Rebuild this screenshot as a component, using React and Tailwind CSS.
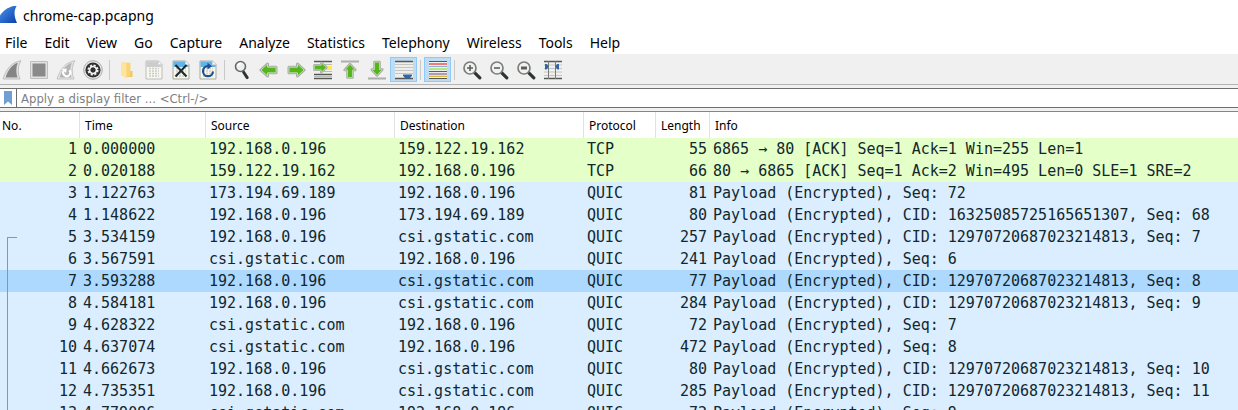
import React from 'react';

const menus = ['File', 'Edit', 'View', 'Go', 'Capture', 'Analyze', 'Statistics', 'Telephony', 'Wireless', 'Tools', 'Help'];

const packets = [
  [1, '0.000000', '192.168.0.196', '159.122.19.162', 'TCP', 55, '6865 → 80 [ACK] Seq=1 Ack=1 Win=255 Len=1'],
  [2, '0.020188', '159.122.19.162', '192.168.0.196', 'TCP', 66, '80 → 6865 [ACK] Seq=1 Ack=2 Win=495 Len=0 SLE=1 SRE=2'],
  [3, '1.122763', '173.194.69.189', '192.168.0.196', 'QUIC', 81, 'Payload (Encrypted), Seq: 72'],
  [4, '1.148622', '192.168.0.196', '173.194.69.189', 'QUIC', 80, 'Payload (Encrypted), CID: 16325085725165651307, Seq: 68'],
  [5, '3.534159', '192.168.0.196', 'csi.gstatic.com', 'QUIC', 257, 'Payload (Encrypted), CID: 12970720687023214813, Seq: 7'],
  [6, '3.567591', 'csi.gstatic.com', '192.168.0.196', 'QUIC', 241, 'Payload (Encrypted), Seq: 6'],
  [7, '3.593288', '192.168.0.196', 'csi.gstatic.com', 'QUIC', 77, 'Payload (Encrypted), CID: 12970720687023214813, Seq: 8'],
  [8, '4.584181', '192.168.0.196', 'csi.gstatic.com', 'QUIC', 284, 'Payload (Encrypted), CID: 12970720687023214813, Seq: 9'],
  [9, '4.628322', 'csi.gstatic.com', '192.168.0.196', 'QUIC', 72, 'Payload (Encrypted), Seq: 7'],
  [10, '4.637074', 'csi.gstatic.com', '192.168.0.196', 'QUIC', 472, 'Payload (Encrypted), Seq: 8'],
  [11, '4.662673', '192.168.0.196', 'csi.gstatic.com', 'QUIC', 80, 'Payload (Encrypted), CID: 12970720687023214813, Seq: 10'],
  [12, '4.735351', '192.168.0.196', 'csi.gstatic.com', 'QUIC', 285, 'Payload (Encrypted), CID: 12970720687023214813, Seq: 11'],
  [13, '4.779096', 'csi.gstatic.com', '192.168.0.196', 'QUIC', 72, 'Payload (Encrypted), Seq: 9'],
];

const SELECTED = 7;
const STREAM_START = 5;

function Icon({ children }) {
  return (
    <svg className="block shrink-0" width="20" height="20" viewBox="0 0 20 20" fill="none" aria-hidden="true">
      {children}
    </svg>
  );
}

const Fin = () => (
  <Icon>
    <path d="M1 19C4 10 9 2 19 .8 15.500 6 15.500 13 18 19Z" fill="#e4e4e4" stroke="#bdbdbd" />
    <path d="M3.500 17.500C6 10 10 4.500 15.800 2.800 13.800 8 14 13 15.500 17.500Z" fill="#858585" />
  </Icon>
);
const Stop = () => (
  <Icon>
    <path d="M1.500 1.500h17v17h-17z" fill="#e2e2e2" stroke="#bfbfbf" />
    <path d="M3.500 3.500h13v13h-13z" fill="#8a8a8a" />
  </Icon>
);
const Restart = () => (
  <Icon>
    <path d="M1 19C4 10 9 2 19 .8 15.500 6 15.500 13 18 19Z" fill="#e4e4e4" stroke="#c4c4c4" />
    <path d="M3.500 17.500C6 10 10 4.500 15.800 2.800 13.800 8 14 13 15.500 17.500Z" fill="#b4b4b4" />
    <path d="M8 10.500a3.500 3.500 0 1 0 5.300-.2" stroke="#fff" strokeWidth="2" />
    <path d="M6 9.200l4.800-.8-.8 4.600z" fill="#fff" />
  </Icon>
);
const Options = () => (
  <Icon>
    <circle cx="10" cy="10" r="9.300" fill="#e9e9e9" stroke="#a9a9a9" />
    <circle cx="10" cy="10" r="7.600" fill="#303030" />
    <circle cx="10" cy="10" r="4.400" stroke="#f1f1f1" strokeWidth="2.400" strokeDasharray="2 1.455" />
    <circle cx="10" cy="10" r="3.400" stroke="#f1f1f1" strokeWidth="1.800" />
    <circle cx="10" cy="10" r="2.400" fill="#303030" />
  </Icon>
);
const Folder = () => (
  <Icon>
    <path d="M4.500 2.500h8v13h-8z" fill="#fbdf8f" />
    <path d="M12 11h3.500v6H9z" fill="#f2c65d" />
    <path d="M4.500 2.500l5 2.500V18.500l-5-3z" fill="#ffe49a" />
    <path d="M9.500 3h4v13.500h-4z" fill="#f8d474" />
  </Icon>
);
function Doc({ top, rows, edge, children }) {
  return (
    <Icon>
      <path d="M2 1h12.500L18 4.500V19H2z" fill="#f7f7ee" stroke={edge} />
      <path d="M2.500 1.500h11.800V5H17.500V7h-15z" fill={top} />
      <path d="M14.500 1v3.500H18z" fill="#fff" stroke="#c1c6c6" strokeWidth=".6" />
      <path d="M5 8.500h10M5 11h10M5 13.500h10M5 16h10" stroke={rows} strokeWidth="1.400" strokeDasharray="2 1" />
      {children}
    </Icon>
  );
}
const Save = () => <Doc top="#cccccc" rows="#cbcbcb" edge="#bcbcbc" />;
const Close = () => (
  <Doc top="#5fb5e6" rows="#d0d0c4" edge="#a9ab9d">
    <path d="M4.500 5l11 11.500M15.500 5l-11 11.500" stroke="#1f2a30" strokeWidth="2" />
  </Doc>
);
const Reload = () => (
  <Doc top="#5fb5e6" rows="#d0d0c4" edge="#a9ab9d">
    <path d="M15 11.500a5 5 0 1 1-5-5.300" stroke="#1f4f94" strokeWidth="2.200" />
    <path d="M9.500 2.800l4.500 3.400-4.500 3.400z" fill="#1f4f94" />
  </Doc>
);
function Lens({ sign }) {
  return (
    <Icon>
      <path d="M12.800 12.800l5 5" stroke="#2e3333" strokeWidth="3.200" strokeLinecap="round" />
      <circle cx="8" cy="8" r="6" fill="#f2f2f0" stroke="#7c7e7b" strokeWidth="1.700" />
      {sign}
    </Icon>
  );
}
const Find = () => (
  <Icon>
    <path d="M11.500 12l3.700 5.600" stroke="#2e3333" strokeWidth="3" strokeLinecap="round" />
    <circle cx="8.500" cy="6.500" r="5" fill="#ecf0ef" stroke="#676a68" strokeWidth="1.600" />
    <path d="M6 6a3 3 0 0 1 3-2.500" stroke="#fff" strokeWidth="1.400" />
  </Icon>
);
const arrow = 'M2 10L8.500 4V7.200h8.500v5.600h-8.500v3.200z';
const Arrow = ({ turn }) => (
  <g transform={turn}>
    <path d={arrow} stroke="#a9aca6" strokeWidth="3" strokeLinejoin="round" />
    <path d={arrow} fill="#55b51c" stroke="#cfe6bd" strokeWidth=".8" strokeLinejoin="round" />
  </g>
);
const Back = () => <Icon><Arrow /></Icon>;
const Forward = () => <Icon><Arrow turn="rotate(180 10 10)" /></Icon>;
const GoTo = () => (
  <Icon>
    <path d="M1 1.500h18M1 14.500h18M1 18.500h18" stroke="#555753" strokeWidth="1.300" />
    <path d="M9 4.500h10M9 11.500h10M1 16.500h18" stroke="#babdb6" strokeWidth="1.200" />
    <path d="M13 6h6v4h-6z" fill="#fce94f" />
    <g transform="translate(15 -.500) scale(-.8 .8)"><Arrow /></g>
  </Icon>
);
const First = () => (
  <Icon>
    <path d="M1 1.500h18" stroke="#adafab" strokeWidth="2" />
    <g transform="translate(1.200 2.500) scale(.88)"><Arrow turn="rotate(90 10 10)" /></g>
  </Icon>
);
const Last = () => (
  <Icon>
    <path d="M1 18.500h18" stroke="#adafab" strokeWidth="2" />
    <g transform="translate(1.200 -.5) scale(.88)"><Arrow turn="rotate(-90 10 10)" /></g>
  </Icon>
);
const AutoScroll = () => (
  <Icon>
    <path d="M1 1h18v18H1z" fill="#eeeeec" />
    <path d="M1 1.500h18M1 18.500h18" stroke="#555753" strokeWidth="1.400" />
    <path d="M1 4.500h18M1 7.500h18M1 10.500h18M1 13.500h18" stroke="#c4c7c0" />
    <path d="M9 14.500h9v1.300L15.500 18.500h-4L9 15.800z" fill="#3465a4" />
  </Icon>
);
const Colorize = () => (
  <Icon>
    <path d="M1 1h18v18H1z" fill="#f3f3f1" />
    <path d="M1 1.500h18M1 18.500h18" stroke="#555753" />
    <path d="M1 4h18" stroke="#ef2929" strokeWidth="1.200" />
    <path d="M1 6.500h18" stroke="#8fadd6" strokeWidth="1.100" />
    <path d="M1 9h18" stroke="#8ae234" strokeWidth="1.200" />
    <path d="M1 11.500h18" stroke="#3465a4" strokeWidth="1.100" />
    <path d="M1 14h18" stroke="#84608f" strokeWidth="1.200" />
    <path d="M1 16.300h18" stroke="#d5aa20" strokeWidth="1.100" />
  </Icon>
);
const ZoomIn = () => <Lens sign={<path d="M5 8h6M8 5v6" stroke="#5b5e5a" strokeWidth="1.600" />} />;
const ZoomOut = () => <Lens sign={<path d="M5 8h6" stroke="#5b5e5a" strokeWidth="1.600" />} />;
const ZoomReset = () => <Lens sign={<path d="M5 8h6" stroke="#5b5e5a" strokeWidth="3" />} />;
const Columns = () => (
  <Icon>
    <path d="M1 5h18M1 8.500h18M1 12h18M1 15.500h18" stroke="#c4c7c0" strokeWidth="1.200" />
    <path d="M1 1.500h18M1 18.500h18" stroke="#555753" strokeWidth="1.500" />
    <path d="M5.500 1v18M12.500 1v18" stroke="#7b7d79" />
    <path d="M2 4h1.500L5.500 5.500v2L3.500 9.500H2zM16 4h-1.500L12.500 5.500v2l2 2H16z" fill="#3465a4" />
  </Icon>
);

const toolGroups = [
  [['Start capture', Fin], ['Stop capture', Stop], ['Restart capture', Restart], ['Capture options', Options]],
  [['Open', Folder], ['Save', Save], ['Close file', Close], ['Reload file', Reload]],
  [['Find packet', Find], ['Previous packet', Back], ['Next packet', Forward], ['Go to packet', GoTo], ['First packet', First], ['Last packet', Last], ['Auto scroll', AutoScroll, true]],
  [['Colorize', Colorize, true]],
  [['Zoom in', ZoomIn], ['Zoom out', ZoomOut], ['Normal size', ZoomReset], ['Resize columns', Columns]],
];

function ToolButton({ label, Glyph, active }) {
  return (
    <button
      type="button"
      aria-label={label}
      aria-pressed={active}
      className={
        active
          ? 'flex h-[25px] w-[27px] items-center justify-center border border-[#90c8f6] bg-[#c0dcf3]'
          : 'flex h-[25px] w-[27px] items-center justify-center'
      }
    >
      <Glyph />
    </button>
  );
}

function Toolbar() {
  return (
    <div role="toolbar" className="flex h-[31px] items-center overflow-hidden border-b border-[#b4b4b4] bg-[#f0f0f0] pt-px">
      <div className="-ml-0.5 flex items-center">
        {toolGroups.map((group, i) => (
          <React.Fragment key={group[0][0]}>
            {i > 0 && (
              <div className="flex w-[7px] justify-center">
                <div className="h-5 w-px bg-[#c9c9c9]" />
              </div>
            )}
            {group.map(([label, Glyph, active]) => (
              <ToolButton key={label} label={label} Glyph={Glyph} active={active} />
            ))}
          </React.Fragment>
        ))}
      </div>
    </div>
  );
}

function StreamMark({ start }) {
  return start ? (
    <span className="absolute top-[11px] bottom-0 left-[7px] w-2.5 border-t border-l border-[#8797a6]" />
  ) : (
    <span className="absolute inset-y-0 left-[7px] w-px bg-[#8797a6]" />
  );
}

function rowColor(no, protocol) {
  if (no === SELECTED) return 'bg-[#aed9ff]';
  return protocol === 'TCP' ? 'bg-[#e4ffc7]' : 'bg-[#daeeff]';
}

const headCell = 'border-r border-[#e2e2e2] p-0 pt-0.5 pl-[5px] text-left font-normal';

function PacketTable() {
  return (
    <table className="w-full table-fixed border-separate border-spacing-0 whitespace-nowrap">
      <colgroup>
        <col className="w-20" />
        <col className="w-[126px]" />
        <col className="w-[189px]" />
        <col className="w-[189px]" />
        <col className="w-[72px]" />
        <col className="w-[54px]" />
        <col />
      </colgroup>
      <thead className="font-['Noto_Sans',sans-serif] text-[12px] leading-6 text-black">
        <tr>
          <th className="border-r border-[#e2e2e2] p-0 pt-0.5 pl-0.5 text-left font-normal">No.</th>
          <th className={headCell}>Time</th>
          <th className={headCell}>Source</th>
          <th className={headCell}>Destination</th>
          <th className={headCell}>Protocol</th>
          <th className={headCell}>Length</th>
          <th className="p-0 pt-0.5 pl-[5px] text-left font-normal">Info</th>
        </tr>
      </thead>
      <tbody className="font-['DejaVu_Sans_Mono',monospace] text-[15px] leading-[22px] text-[#12272e]">
        {packets.map(([no, time, source, destination, protocol, length, info]) => (
          <tr key={no} className={rowColor(no, protocol)}>
            <td className="relative p-0 pr-[3px] text-right">
              {no >= STREAM_START && <StreamMark start={no === STREAM_START} />}
              {no}
            </td>
            <td className="p-0 pl-[3px]">{time}</td>
            <td className="p-0 pl-[3px]">{source}</td>
            <td className="p-0 pl-[3px]">{destination}</td>
            <td className="p-0 pl-[3px]">{protocol}</td>
            <td className="p-0 pr-[3px] text-right">{length}</td>
            <td className="overflow-hidden p-0 pl-[3px]">{info}</td>
          </tr>
        ))}
      </tbody>
    </table>
  );
}

export default function App() {
  return (
    <div className="h-screen overflow-hidden bg-white font-['Noto_Sans',sans-serif] text-black">
      <header className="flex h-8 items-center gap-[5px]">
        <svg width="18" height="20" viewBox="0 0 18 20" aria-hidden="true">
          <defs>
            <linearGradient id="fin" x1="0" y1="0" x2="1" y2="1">
              <stop offset="0" stopColor="#4a94ee" />
              <stop offset="1" stopColor="#0b3fa8" />
            </linearGradient>
          </defs>
          <path d="M0 17V9.500C3.500 4 9 .3 17 -.5 13.500 4 14 11 17 17Z" fill="url(#fin)" />
        </svg>
        <h1 className="text-sm">chrome-cap.pcapng</h1>
      </header>
      <nav className="flex h-[22px] items-center gap-[17px] pl-[5px] text-sm">
        {menus.map((name) => (
          <button type="button" key={name}>{name}</button>
        ))}
      </nav>
      <Toolbar />
      <form className="border-b border-[#85858f] bg-[#f0f0f0] pt-[3px] pb-[3px]" onSubmit={(e) => e.preventDefault()}>
        <div className="flex h-5 border-y border-[#6d6d6d] bg-white">
          <button type="button" aria-label="Filter bookmarks" className="flex w-[17px] items-center justify-center border-r border-[#6d6d6d]">
            <svg width="10" height="14" viewBox="0 0 10 14" aria-hidden="true">
              <path d="M1 0h8v14L5 10.500 1 14z" fill="#6f9fd3" />
            </svg>
          </button>
          <input
            type="text"
            aria-label="Display filter"
            placeholder="Apply a display filter ... &lt;Ctrl-/&gt;"
            className="min-w-0 flex-1 pt-px pl-1 font-['DejaVu_Sans_Condensed','DejaVu_Sans',sans-serif] text-[13px] leading-4 outline-none placeholder:text-[#7f7f7f]"
          />
        </div>
      </form>
      <PacketTable />
    </div>
  );
}
